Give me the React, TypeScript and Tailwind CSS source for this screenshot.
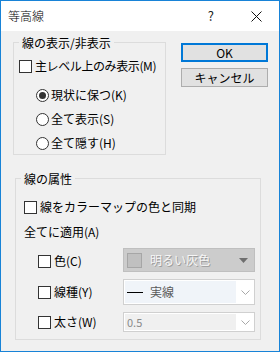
import React from "react";

const font = { fontFamily: '"Noto Sans CJK JP", "Noto Sans", sans-serif' };

function CheckBox({ label, tight }: { label: string; tight?: boolean }) {
  return (
    <div className="flex items-center h-[16px] gap-[3px]">
      <span className="w-[13px] h-[13px] border border-[#333333] bg-white shrink-0" />
      <span
        className={
          tight
            ? "text-[12px] leading-none text-black whitespace-nowrap tracking-[-0.4px]"
            : "text-[12px] leading-none text-black whitespace-nowrap"
        }
      >
        {label}
      </span>
    </div>
  );
}

function Radio({ label, checked }: { label: string; checked?: boolean }) {
  return (
    <div className="flex items-center h-[16px] gap-[2px]">
      <span className="w-[13px] h-[13px] rounded-full border border-[#333333] bg-white shrink-0 flex items-center justify-center">
        {checked && <span className="w-[7px] h-[7px] rounded-full bg-[#333333]" />}
      </span>
      <span className="text-[12px] leading-none text-black whitespace-nowrap">{label}</span>
    </div>
  );
}

function Chevron() {
  return (
    <svg width="9" height="5" viewBox="0 0 9 5" className="shrink-0">
      <path d="M0.5 0.5 L4.5 4.5 L8.5 0.5" fill="none" stroke="#a8a8a8" strokeWidth="1" />
    </svg>
  );
}

export default function App() {
  return (
    <div style={font} className="w-[280px] h-[352px] border border-[#1883d7] bg-[#f0f0f0] flex flex-col overflow-hidden">
      {/* Title bar */}
      <div className="h-[30px] bg-white flex items-center shrink-0">
        <span className="ml-[7px] text-[12px] font-light text-black">等高線</span>
        <span className="ml-auto text-[13px] text-[#222] mr-[37px]">?</span>
        <svg width="11" height="11" viewBox="0 0 11 11" className="mr-[17px]">
          <path d="M0.5 0.5 L10.5 10.5 M10.5 0.5 L0.5 10.5" stroke="#111" strokeWidth="1" />
        </svg>
      </div>

      <div className="flex">
        {/* 線の表示/非表示 */}
        <div className="relative ml-[12px] mt-[11px] w-[153px] h-[113px] border border-[#dcdcdc] pl-[5px] pt-[15px] shrink-0">
          <span className="absolute -top-[8px] left-[5px] px-[3px] bg-[#f0f0f0] text-[12px] leading-[16px] text-black">
            線の表示/非表示
          </span>
          <CheckBox label="主レベル上のみ表示(M)" tight />
          <div className="ml-[17px] mt-[13px] flex flex-col gap-[8px]">
            <Radio label="現状に保つ(K)" checked />
            <Radio label="全て表示(S)" />
            <Radio label="全て隠す(H)" />
          </div>
        </div>

        {/* Buttons */}
        <div className="ml-[15px] mt-[12px] flex flex-col gap-[6px]">
          <button className="w-[87px] h-[19px] border-2 border-[#0078d7] bg-[#e1e1e1] text-[12px] leading-none text-black flex items-center justify-center">
            OK
          </button>
          <button className="w-[87px] h-[19px] border border-[#adadad] bg-[#e1e1e1] text-[12px] leading-none text-black flex items-center justify-center">
            キャンセル
          </button>
        </div>
      </div>

      {/* 線の属性 */}
      <div className="relative ml-[14px] mt-[23px] w-[246px] h-[162px] border border-[#dcdcdc] pt-[20px] pl-[8px] flex flex-col">
        <span className="absolute -top-[8px] left-[5px] px-[3px] bg-[#f0f0f0] text-[12px] leading-[16px] text-black">
          線の属性
        </span>
        <CheckBox label="線をカラーマップの色と同期" />
        <div className="mt-[9px] h-[16px] flex items-center text-[12px] leading-none text-black">全てに適用(A)</div>

        {/* 色 */}
        <div className="mt-[8px] h-[24px] flex items-center">
          <div className="ml-[14px] w-[85px] mt-[2px]">
            <CheckBox label="色(C)" />
          </div>
          <div className="w-[132px] h-[24px] bg-[#cccccc] border border-[#bfbfbf] flex items-center pl-[3px] pr-[6px]">
            <span className="w-[15px] h-[15px] bg-[#c0c0c0] border border-[#a6a6a6] shrink-0" />
            <span className="ml-[8px] text-[12px] leading-none text-[#f6f6f6] [text-shadow:1px_1px_0_#9c9c9c] whitespace-nowrap">
              明るい灰色
            </span>
            <svg width="9" height="5" viewBox="0 0 9 5" className="ml-auto">
              <path d="M0 0 L9 0 L4.5 5 Z" fill="#6e6e6e" />
            </svg>
          </div>
        </div>

        {/* 線種 */}
        <div className="mt-[7px] h-[26px] flex items-center">
          <div className="ml-[14px] w-[85px]">
            <CheckBox label="線種(Y)" />
          </div>
          <div className="w-[132px] h-[26px] bg-white border border-[#d0d0d0] flex items-center p-[1px] pr-[4px]">
            <div className="w-[111px] h-full bg-[#f0f4f9] flex items-center">
              <span className="ml-[2px] w-[16px] h-[1px] bg-black" />
              <span className="ml-[7px] text-[12px] leading-none text-[#5a5a5a]">実線</span>
            </div>
            <span className="ml-auto">
              <Chevron />
            </span>
          </div>
        </div>

        {/* 太さ */}
        <div className="mt-[7px] h-[20px] flex items-center">
          <div className="ml-[14px] w-[85px]">
            <CheckBox label="太さ(W)" />
          </div>
          <div className="w-[132px] h-[20px] bg-white border border-[#d0d0d0] flex items-center p-[1px] pr-[4px]">
            <div className="w-[111px] h-full bg-[#f0f0f0] flex items-center">
              <span className="ml-[2px] text-[11px] leading-none text-[#8a8a8a]">0.5</span>
            </div>
            <span className="ml-auto">
              <Chevron />
            </span>
          </div>
        </div>
      </div>
    </div>
  );
}
